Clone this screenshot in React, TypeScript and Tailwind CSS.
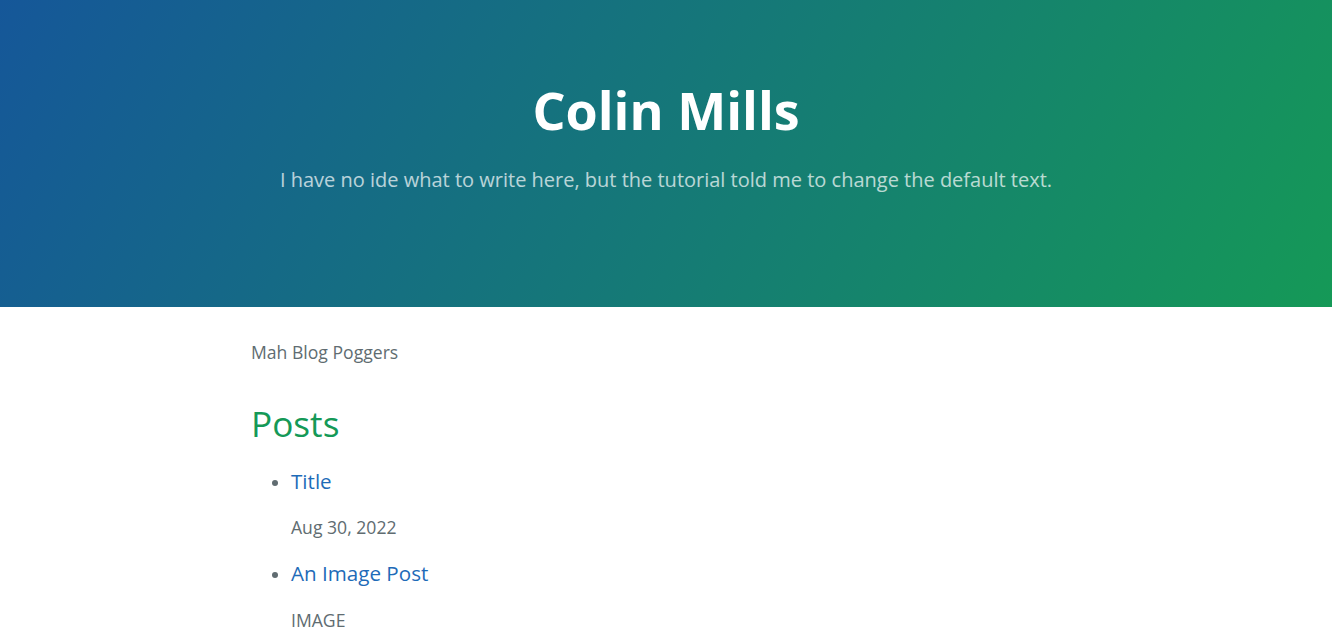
export default function App() {
  return (
    <div className="min-h-screen bg-white text-[#606c71]" style={{ fontFamily: '"Open Sans", "Liberation Sans", sans-serif' }}>
      <header className="bg-[#159957] bg-[linear-gradient(120deg,#155799,#159957)] text-white text-center pt-[71px] pb-[80px] px-24">
        <h1 className="text-[52px] leading-[78px] font-bold mb-[16px]">Colin Mills</h1>
        <h2 className="text-[20px] leading-[30px] font-normal opacity-70 mb-[32px]">
          I have no ide what to write here, but the tutorial told me to change the default text.
        </h2>
      </header>
      <main className="max-w-[1024px] mx-auto pl-[97px] pr-24 pt-8 text-[17.6px] leading-[26.4px]">
        <p>Mah Blog Poggers</p>
        <h2 className="text-[35.2px] leading-[52.8px] text-[#159957] font-normal mt-[32px] mb-[16px]">Posts</h2>
        <ul className="list-disc pl-10">
          <li>
            <h3 className="text-[20.6px] leading-[31px] font-normal">
              <a href="#" className="text-[#1e6bb8]">Title</a>
            </h3>
            <p className="mt-[17px]">Aug 30, 2022</p>
          </li>
          <li className="mt-[17.6px]">
            <h3 className="text-[20.6px] leading-[31px] font-normal">
              <a href="#" className="text-[#1e6bb8]">An Image Post</a>
            </h3>
            <p className="mt-[18px]">IMAGE</p>
          </li>
        </ul>
      </main>
    </div>
  );
}
